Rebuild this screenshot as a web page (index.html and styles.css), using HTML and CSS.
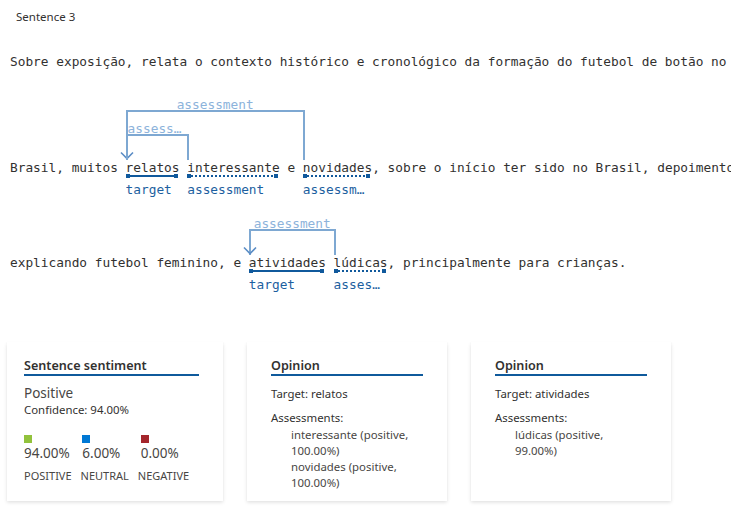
FILE: index.html
```html
<!DOCTYPE html>
<html lang="pt">
<head>
<meta charset="utf-8">
<title>Sentence 3</title>
<link rel="stylesheet" href="styles.css">
</head>
<body>
<div class="page">
  <div class="heading">Sentence 3</div>

  <div class="diagram">
    <div class="row row-1">Sobre exposição, relata o contexto histórico e cronológico da formação do futebol de botão no</div>

    <div class="row row-2">
      <div class="arc lvl-1" style="--from:15;--to:23">
        <span class="arc-label">assessment</span>
        <svg class="arrow" width="14" height="9" viewBox="0 0 14 9"><polyline points="1,1.5 7,7.5 13,1.5"/></svg>
      </div>
      <div class="arc lvl-2" style="--from:15;--to:38">
        <span class="arc-label">assessment</span>
      </div>Brasil, muitos <span class="tok">relatos<span class="ul"></span><span class="tag">target</span></span> <span class="tok">interessante<span class="ul dotted"></span><span class="tag">assessment</span></span> e <span class="tok">novidades<span class="ul dotted"></span><span class="tag">assessment</span></span>, sobre o início ter sido no Brasil, depoimentos de</div>

    <div class="row row-3">
      <div class="arc lvl-1" style="--from:31;--to:42">
        <span class="arc-label">assessment</span>
        <svg class="arrow" width="14" height="9" viewBox="0 0 14 9"><polyline points="1,1.5 7,7.5 13,1.5"/></svg>
      </div>explicando futebol feminino, e <span class="tok">atividades<span class="ul"></span><span class="tag">target</span></span> <span class="tok">lúdicas<span class="ul dotted"></span><span class="tag">assessment</span></span>, principalmente para crianças.</div>
  </div>

  <div class="cards">
    <div class="card card-sentiment">
      <div class="card-title">Sentence sentiment</div>
      <div class="sentiment-label">Positive</div>
      <div class="small">Confidence: 94.00%</div>
      <div class="scores">
        <div class="score"><span class="swatch pos"></span><span class="pct">94.00%</span></div>
        <div class="score"><span class="swatch neu"></span><span class="pct">6.00%</span></div>
        <div class="score"><span class="swatch neg"></span><span class="pct">0.00%</span></div>
      </div>
      <div class="score-names">
        <span>POSITIVE</span><span>NEUTRAL</span><span>NEGATIVE</span>
      </div>
    </div>

    <div class="card">
      <div class="card-title">Opinion</div>
      <div class="small target-line">Target: relatos</div>
      <div class="small assess-head">Assessments:</div>
      <ul class="assess-list">
        <li>interessante (positive, 100.00%)</li>
        <li>novidades (positive, 100.00%)</li>
      </ul>
    </div>

    <div class="card">
      <div class="card-title">Opinion</div>
      <div class="small target-line">Target: atividades</div>
      <div class="small assess-head">Assessments:</div>
      <ul class="assess-list">
        <li>lúdicas (positive, 99.00%)</li>
      </ul>
    </div>
  </div>
</div>
</body>
</html>
```

FILE: styles.css
```css
html, body {
  margin: 0;
  padding: 0;
  background: #ffffff;
}

body {
  width: 731px;
  height: 508px;
  overflow: hidden;
  font-family: "Segoe UI", "Noto Sans", "Open Sans", sans-serif;
  color: #323130;
}

.page {
  position: relative;
}

.heading {
  padding: 8px 16px 0;
  font-size: 11.5px;
  line-height: 18px;
  color: #323130;
}

/* ---------- dependency diagram ---------- */
.diagram {
  padding-left: 10px;
  font-family: "DejaVu Sans Mono", "Liberation Mono", monospace;
  font-size: 12.8px;
  color: #323130;
}

.row {
  position: relative;
  white-space: nowrap;
  line-height: 16px;
  height: 16px;
}

.row-1 { margin-top: 28px; }
.row-2 { margin-top: 90px; }
.row-3 { margin-top: 79px; }

.tok {
  position: relative;
  display: inline-block;
  height: 16px;
  vertical-align: top;
}

.ul {
  position: absolute;
  left: 0;
  right: 2px;
  top: 14px;
  height: 4px;
  --c: #10599c;
  background:
    linear-gradient(var(--c), var(--c)) left center / 4px 4px no-repeat,
    linear-gradient(var(--c), var(--c)) right center / 4px 4px no-repeat,
    linear-gradient(var(--c), var(--c)) center / 100% 2px no-repeat;
}

.ul.dotted {
  background:
    linear-gradient(var(--c), var(--c)) left center / 4px 4px no-repeat,
    linear-gradient(var(--c), var(--c)) right center / 4px 4px no-repeat,
    repeating-linear-gradient(to right, var(--c) 0 2px, transparent 2px 4px) center / 100% 2px no-repeat;
}

.tag {
  position: absolute;
  left: 0;
  top: 23px;
  width: calc(100% - 2px);
  line-height: 14px;
  color: #1d5f9f;
  overflow: hidden;
  text-overflow: ellipsis;
  white-space: nowrap;
}

.arc {
  position: absolute;
  bottom: 100%;
  left: calc(var(--from) * 1ch);
  width: calc((var(--to) - var(--from)) * 1ch + 2px);
  box-sizing: border-box;
  border: 2px solid #7ea8d2;
  border-bottom: none;
}

.arc.lvl-1 { height: 26px; }
.arc.lvl-2 { height: 50px; }

.arc-label {
  position: absolute;
  left: 0;
  right: 0;
  top: -14px;
  line-height: 14px;
  text-align: center;
  color: #8db3db;
  overflow: hidden;
  text-overflow: ellipsis;
  white-space: nowrap;
}

.arrow {
  position: absolute;
  left: -8px;
  bottom: 0;
  fill: none;
  stroke: #5b8dc5;
  stroke-width: 1.6;
}

/* ---------- cards ---------- */
.cards {
  display: flex;
  gap: 24px;
  padding-left: 7px;
  margin-top: 71px;
}

.card {
  box-sizing: border-box;
  width: 200px;
  height: 159px;
  padding: 16px 24px 0;
  background: #ffffff;
  box-shadow: 0 1.6px 3.6px rgba(0, 0, 0, 0.13), 0 0.3px 0.9px rgba(0, 0, 0, 0.11);
  font-size: 11.4px;
}

.card-sentiment {
  width: 216px;
  padding-left: 17px;
  padding-right: 24px;
}

.card-title {
  font-size: 12.6px;
  font-weight: 600;
  line-height: 16px;
  border-bottom: 2px solid #0f5a9c;
  color: #323130;
}

.sentiment-label {
  margin-top: 8px;
  font-size: 13.5px;
  line-height: 18px;
  color: #484644;
}

.small {
  font-size: 11.4px;
  line-height: 16px;
  color: #323130;
}

.scores {
  display: flex;
  margin-top: 17px;
}

.score {
  display: flex;
  flex-direction: column;
  align-items: flex-start;
  width: 62px;
}

.swatch {
  width: 8px;
  height: 8px;
}

.swatch.pos { background: #92c23c; }
.swatch.neu { background: #0078d4; }
.swatch.neg { background: #a4262c; }

.pct {
  margin-top: 1px;
  font-size: 13.5px;
  line-height: 18px;
  color: #484644;
}

.score-names {
  display: flex;
  gap: 9px;
  margin-top: 6px;
  font-size: 11px;
  line-height: 16px;
  color: #484644;
}

.target-line { margin-top: 10px; }
.assess-head { margin-top: 8px; }

.assess-list {
  list-style: none;
  margin: 1px 0 0;
  padding: 0 0 0 20px;
  font-size: 11.4px;
  line-height: 16px;
  color: #484644;
}
```
